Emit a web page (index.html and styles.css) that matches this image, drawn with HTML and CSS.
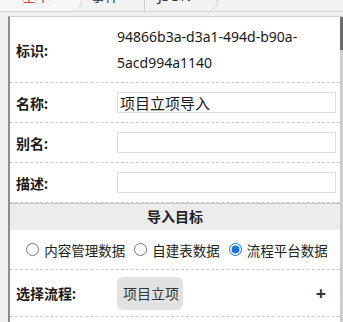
FILE: index.html
```html
<!DOCTYPE html>
<html lang="zh-CN">
<head>
    <meta charset="UTF-8">
    <meta name="viewport" content="width=device-width, initial-scale=1.0">
    <title>属性面板</title>
    <link rel="stylesheet" href="styles.css">
</head>
<body>
    <div class="tabs">
        <div class="tab tab-basic active">基本</div>
        <div class="tab tab-event">事件</div>
        <div class="tab tab-json">JSON</div>
    </div>

    <div class="panel">
        <div class="content">
            <div class="row row-id">
                <div class="label">标识:</div>
                <div class="value">94866b3a-d3a1-494d-b90a-5acd994a1140</div>
            </div>
            <div class="row">
                <div class="label">名称:</div>
                <input class="field" type="text" value="项目立项导入">
            </div>
            <div class="row">
                <div class="label">别名:</div>
                <input class="field" type="text" value="">
            </div>
            <div class="row">
                <div class="label">描述:</div>
                <input class="field" type="text" value="">
            </div>

            <div class="section-title">导入目标</div>

            <div class="row radios">
                <label class="radio"><input type="radio" name="target"> 内容管理数据</label>
                <label class="radio"><input type="radio" name="target"> 自建表数据</label>
                <label class="radio"><input type="radio" name="target" checked> 流程平台数据</label>
            </div>

            <div class="row row-flow">
                <div class="label">选择流程:</div>
                <span class="flow-btn">项目立项</span>
                <span class="plus">+</span>
            </div>
        </div>
        <div class="scrollbar"><div class="thumb"></div></div>
    </div>
</body>
</html>
```

FILE: styles.css
```css
body {
    margin: 0;
    background-color: #f0f0f0;
    font-family: "Noto Sans", "Noto Sans CJK SC", sans-serif;
    font-size: 14px;
    color: #222;
}

.tabs {
    display: flex;
    height: 27px;
    margin-top: -16px;
    border-bottom: 1px solid #d2d2d2;
    background-color: #f2f2f2;
}
.tab {
    box-sizing: border-box;
    line-height: 24px;
    color: #333;
    border-right: 1px solid #cfcfcf;
}
.tab-basic {
    width: 82px;
    padding-left: 22px;
    color: #d9443a;
    background-color: #f7f7f7;
    border-radius: 0 0 10px 0;
}
.tab-event {
    width: 63px;
    padding-left: 9px;
}
.tab-json {
    width: 73px;
    padding-left: 13px;
    border-radius: 0 0 10px 0;
}

.panel {
    display: flex;
    margin: 4px 0 0 8px;
    border-top: 1px solid #cfcfcf;
    border-left: 2px solid #8c8c8c;
    background-color: #fff;
    height: 310px;
}
.content {
    flex: 1;
    min-width: 0;
}
.scrollbar {
    width: 3px;
    flex-shrink: 0;
    background-color: #cdcdcd;
}
.thumb {
    height: 33px;
    background-color: #6b6b6b;
}

.row {
    display: flex;
    align-items: center;
    height: 39px;
    padding: 0 4px 0 6px;
    border-bottom: 1px dashed #cccccc;
}
.label {
    width: 101px;
    flex-shrink: 0;
    font-weight: bold;
    color: #1a1a1a;
}
.row-id {
    height: auto;
    padding-top: 7px;
    padding-bottom: 6px;
}
.value {
    line-height: 26px;
    color: #1a1a1a;
}
.field {
    flex: 1;
    width: 0;
    min-width: 0;
    height: 21px;
    box-sizing: border-box;
    margin: 0;
    padding: 0 2px;
    border: 1px solid #dcdcdc;
    font-family: inherit;
    font-size: 15px;
    color: #1a1a1a;
    outline: none;
}

.section-title {
    height: 26px;
    line-height: 26px;
    border-top: 1px solid #c4c4c4;
    background-color: #ececec;
    text-align: center;
    font-weight: bold;
}

.radios {
    justify-content: center;
    gap: 9px;
    padding-left: 8px;
    font-size: 13.5px;
}
.radio {
    display: flex;
    align-items: center;
    gap: 5px;
}
.radio input {
    margin: 0;
    width: 13px;
    height: 13px;
    accent-color: #1a73e8;
}

.row-flow {
    height: 46px;
}
.flow-btn {
    height: 33px;
    line-height: 33px;
    padding: 0 4px 0 6px;
    border-radius: 6px;
    background-color: #e2e2e2;
    color: #333;
}
.plus {
    margin-left: auto;
    margin-right: 10px;
    font-size: 18px;
    font-weight: bold;
    color: #333;
}
```
